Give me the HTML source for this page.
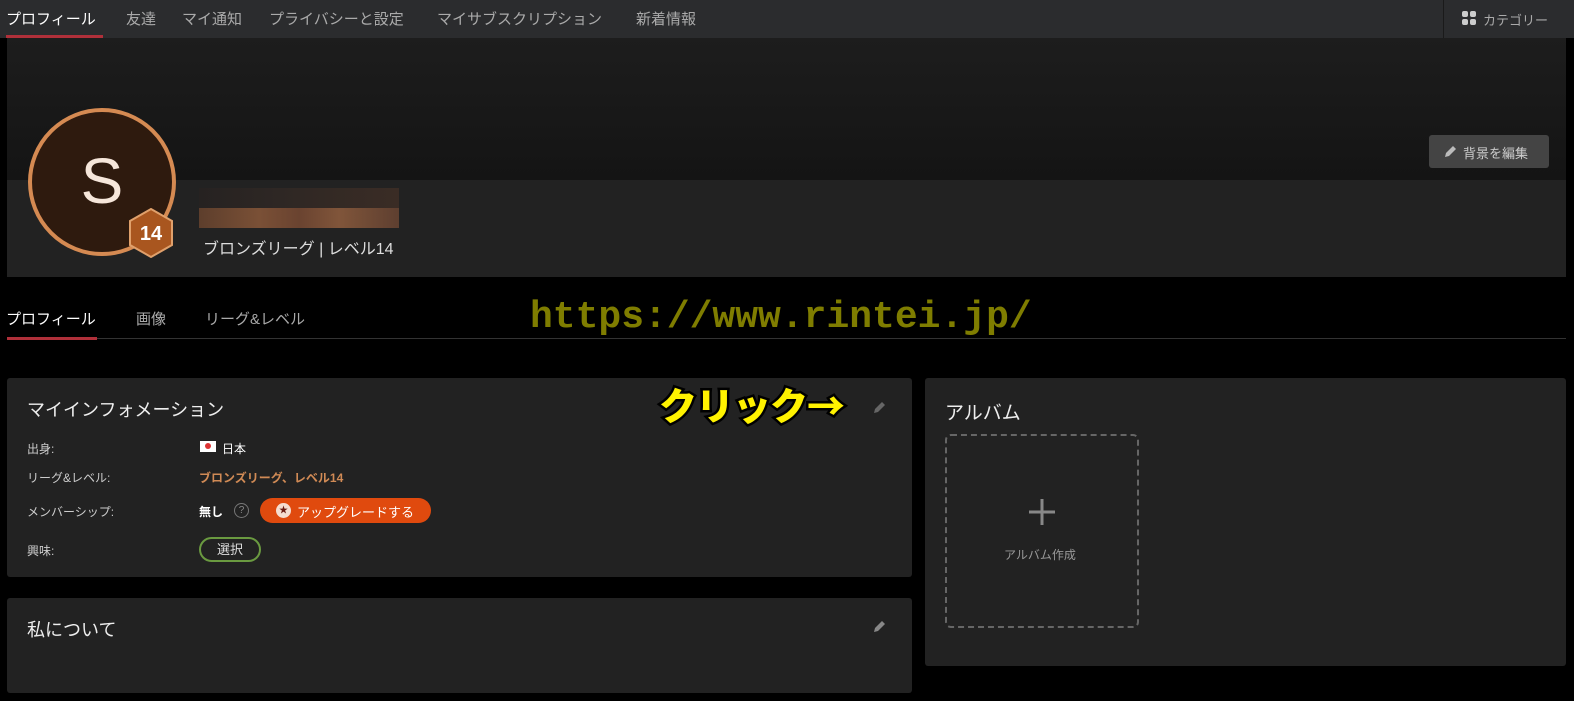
<!DOCTYPE html>
<html><head><meta charset="utf-8"><style>
*{margin:0;padding:0;box-sizing:border-box}
body{width:1574px;height:701px;background:#000;font-family:"Liberation Sans","Noto Sans CJK JP",sans-serif;color:#ddd;position:relative;overflow:hidden}
.a{position:absolute}
.nav{left:0;top:0;width:1574px;height:38px;background:#2b2c2e}
.nav span{position:absolute;top:8px;font-size:15px;color:#aaa}
.card{background:#222;border-radius:3px}
.lbl{font-size:12px;color:#ccc}
</style></head><body>
<div class="a nav">
<span style="left:6px;color:#fff">プロフィール</span>
<span style="left:126px">友達</span>
<span style="left:182px">マイ通知</span>
<span style="left:269px">プライバシーと設定</span>
<span style="left:437px">マイサブスクリプション</span>
<span style="left:636px">新着情報</span>
<div class="a" style="left:6px;top:35px;width:97px;height:3px;background:#b0303a"></div>
<div class="a" style="left:1443px;top:0;width:1px;height:38px;background:#1a1a1a"></div>
<svg class="a" style="left:1462px;top:11px" width="15" height="15"><rect x="0" y="0" width="6" height="6" rx="2" fill="#ccc"/><rect x="8" y="0" width="6" height="6" rx="2" fill="#ccc"/><rect x="0" y="8" width="6" height="6" rx="2" fill="#ccc"/><rect x="8" y="8" width="6" height="6" rx="2" fill="#ccc"/></svg>
<span style="left:1483px;font-size:13px;top:10px">カテゴリー</span>
</div>
<div class="a" style="left:7px;top:38px;width:1559px;height:142px;background:linear-gradient(#1d1d1d,#141414)"></div>
<div class="a" style="left:7px;top:180px;width:1559px;height:97px;background:#222"></div>
<div class="a" style="left:1429px;top:135px;width:120px;height:33px;background:#444;border-radius:3px;font-size:13px;color:#ccc;padding:8px 0 0 34px">背景を編集</div>
<svg class="a" style="left:1444px;top:144px" width="14" height="14"><path d="M1 13 L2 9 L9 2 L12 5 L5 12 Z" fill="#bbb"/></svg>
<div class="a" style="left:28px;top:108px;width:148px;height:148px;border-radius:50%;border:4px solid #d58a52;background:#2e1a0e;color:#f6e6da;font-size:64px;text-align:center;line-height:138px">S</div>
<svg class="a" style="left:128px;top:208px" width="46" height="50"><polygon points="23,1 44,13 44,37 23,49 2,37 2,13" fill="#a9561f" stroke="#e0a06b" stroke-width="2"/><text x="23" y="32" text-anchor="middle" font-family="Liberation Sans" font-weight="bold" font-size="20" fill="#fff">14</text></svg>
<div class="a" style="left:199px;top:188px;width:200px;height:20px;background:linear-gradient(90deg,#262221,#2e2724 40%,#3a2c25)"></div>
<div class="a" style="left:199px;top:208px;width:200px;height:20px;background:linear-gradient(90deg,#5d3e2c,#7a5036 30%,#6a4330 50%,#80553a 70%,#5e3f30)"></div>
<div class="a" style="left:203px;top:235px;font-size:16px;color:#ddd">ブロンズリーグ | レベル14</div>
<div class="a" style="left:6px;top:308px;font-size:15px;color:#fff">プロフィール</div>
<div class="a" style="left:136px;top:308px;font-size:15px;color:#aaa">画像</div>
<div class="a" style="left:205px;top:308px;font-size:15px;color:#aaa">リーグ&amp;レベル</div>
<div class="a" style="left:7px;top:338px;width:1559px;height:1px;background:#333"></div>
<div class="a" style="left:7px;top:337px;width:90px;height:3px;background:#b0303a"></div>
<div class="a" style="left:530px;top:296px;font-family:'Liberation Mono',monospace;font-weight:bold;font-size:38px;color:#7f7d00">https://www.rintei.jp/</div>
<div class="a card" style="left:7px;top:378px;width:905px;height:199px"></div>
<div class="a" style="left:27px;top:396px;font-size:18px;color:#eee">マイインフォメーション</div>
<svg class="a" style="left:655px;top:380px" width="215" height="50"><text x="4" y="40" font-family="Noto Sans CJK JP,sans-serif" font-weight="900" font-size="38" fill="#fff200" stroke="#000" stroke-width="5" paint-order="stroke" letter-spacing="-1">クリック→</text></svg>
<svg class="a" style="left:873px;top:400px" width="14" height="14"><path d="M1 13 L2 9 L9 2 L12 5 L5 12 Z" fill="#666"/></svg>
<div class="a lbl" style="left:27px;top:440px">出身:</div>
<div class="a" style="left:200px;top:441px;width:16px;height:11px;background:#fff"><div style="margin:2px 5px;width:6px;height:6px;border-radius:50%;background:#d33"></div></div>
<div class="a lbl" style="left:222px;top:440px;color:#fff">日本</div>
<div class="a lbl" style="left:27px;top:469px">リーグ&amp;レベル:</div>
<div class="a lbl" style="left:199px;top:469px;color:#d08a55;font-weight:bold">ブロンズリーグ、レベル14</div>
<div class="a lbl" style="left:27px;top:503px">メンバーシップ:</div>
<div class="a lbl" style="left:199px;top:503px;color:#fff;font-weight:bold">無し</div>
<div class="a" style="left:234px;top:503px;width:15px;height:15px;border:1px solid #777;border-radius:50%;font-size:10px;color:#888;text-align:center;line-height:13px">?</div>
<div class="a" style="left:260px;top:498px;width:171px;height:25px;background:#e04a0e;border-radius:13px;font-size:13px;color:#fff;padding:4px 0 0 37px">アップグレードする</div>
<div class="a" style="left:276px;top:503px;width:15px;height:15px;border-radius:50%;background:#f5ddd0;color:#6a1a10;font-size:9px;text-align:center;line-height:15px">★</div>
<div class="a lbl" style="left:27px;top:542px">興味:</div>
<div class="a" style="left:199px;top:537px;width:62px;height:25px;border:2px solid #6a9a40;border-radius:13px;font-size:13px;color:#ddd;text-align:center;line-height:21px">選択</div>
<div class="a card" style="left:7px;top:598px;width:905px;height:95px"></div>
<div class="a" style="left:27px;top:616px;font-size:18px;color:#eee">私について</div>
<svg class="a" style="left:873px;top:619px" width="14" height="14"><path d="M1 13 L2 9 L9 2 L12 5 L5 12 Z" fill="#888"/></svg>
<div class="a card" style="left:925px;top:378px;width:641px;height:288px"></div>
<div class="a" style="left:945px;top:398px;font-size:19px;color:#eee">アルバム</div>
<div class="a" style="left:945px;top:434px;width:194px;height:194px;border:2px dashed #666;border-radius:6px"></div>
<svg class="a" style="left:1028px;top:498px" width="28" height="28"><path d="M14 1V27M1 14H27" stroke="#888" stroke-width="3"/></svg>
<div class="a" style="left:1004px;top:546px;font-size:12px;color:#999">アルバム作成</div>
</body></html>
